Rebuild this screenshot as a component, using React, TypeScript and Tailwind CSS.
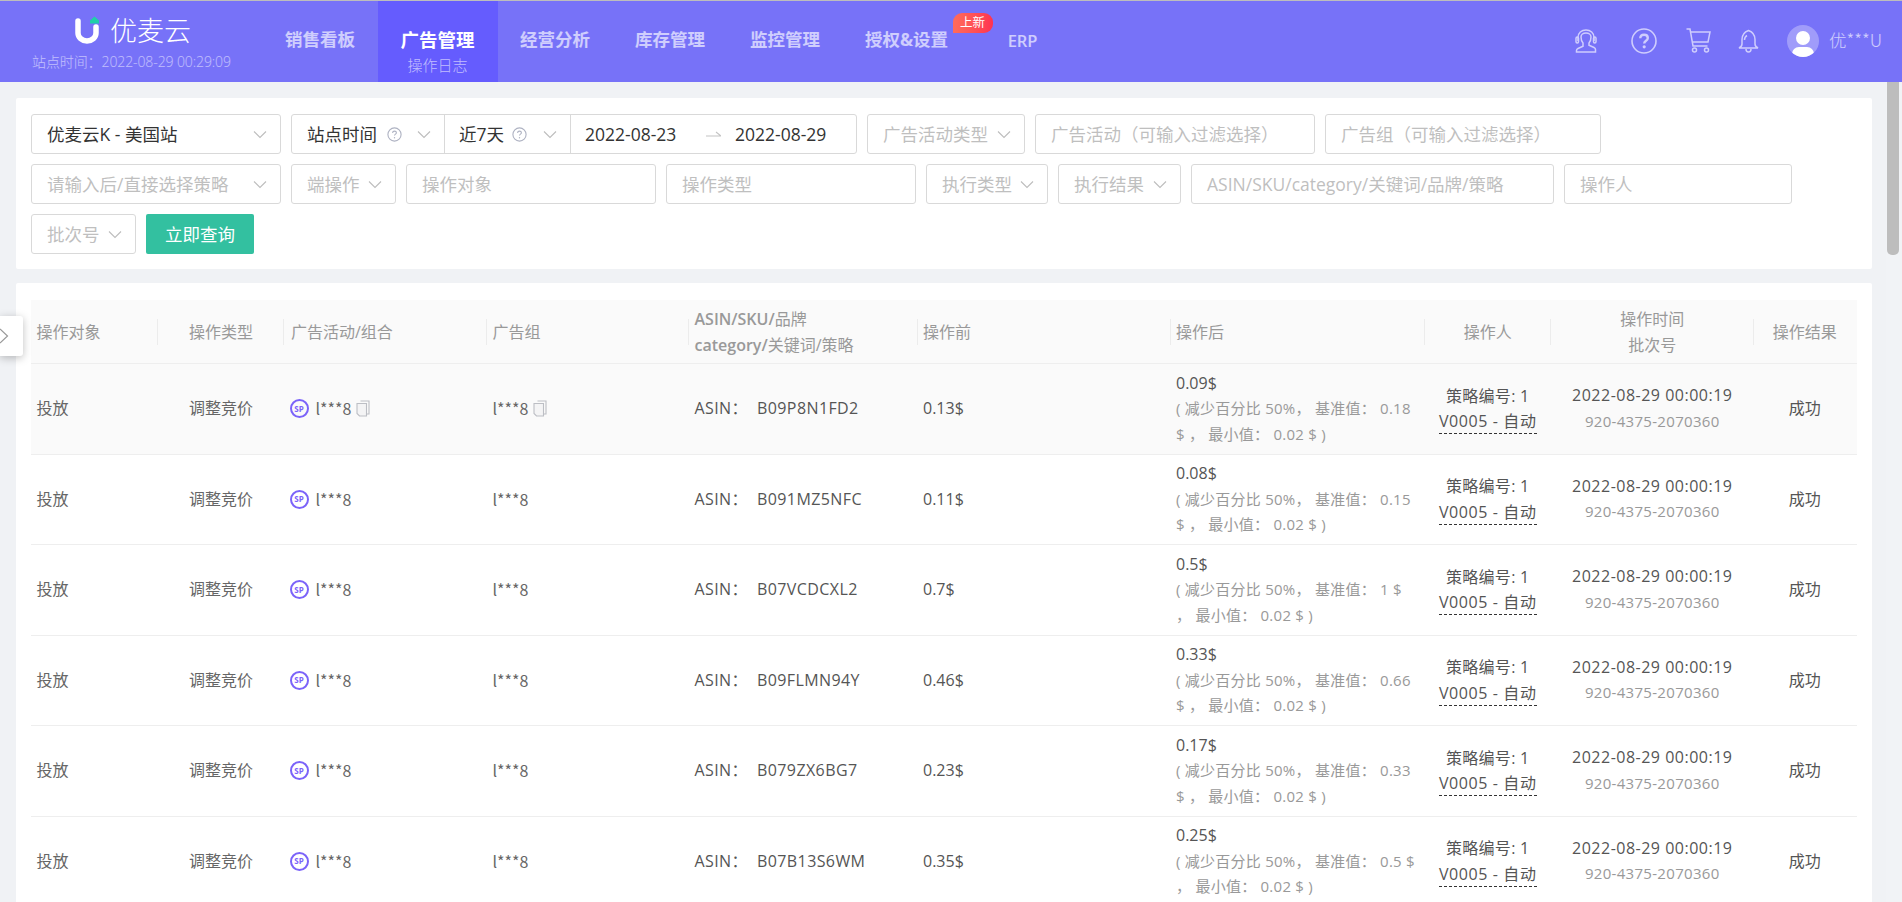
import React from 'react';

const navItems = ['销售看板', '广告管理', '经营分析', '库存管理', '监控管理', '授权&设置'];

const rows = [
  { asin: 'B09P8N1FD2', before: '0.13$', after: '0.09$', l1: '( 减少百分比 50%， 基准值： 0.18', l2: '$ ， 最小值： 0.02 $ )', copy: true },
  { asin: 'B091MZ5NFC', before: '0.11$', after: '0.08$', l1: '( 减少百分比 50%， 基准值： 0.15', l2: '$ ， 最小值： 0.02 $ )', copy: false },
  { asin: 'B07VCDCXL2', before: '0.7$', after: '0.5$', l1: '( 减少百分比 50%， 基准值： 1 $', l2: '， 最小值： 0.02 $ )', copy: false },
  { asin: 'B09FLMN94Y', before: '0.46$', after: '0.33$', l1: '( 减少百分比 50%， 基准值： 0.66', l2: '$ ， 最小值： 0.02 $ )', copy: false },
  { asin: 'B079ZX6BG7', before: '0.23$', after: '0.17$', l1: '( 减少百分比 50%， 基准值： 0.33', l2: '$ ， 最小值： 0.02 $ )', copy: false },
  { asin: 'B07B13S6WM', before: '0.35$', after: '0.25$', l1: '( 减少百分比 50%， 基准值： 0.5 $', l2: '， 最小值： 0.02 $ )', copy: false },
];

const gridCols = 'grid grid-cols-[127px_126px_203px_202px_228.5px_253px_254px_126.5px_202.5px_102.5px]';

const Chevron = () => (
  <svg width="14" height="9" viewBox="0 0 14 9" fill="none" className="shrink-0">
    <path d="M1 1.5 7 7.5 13 1.5" stroke="#bdbdbd" strokeWidth="1.1" />
  </svg>
);

const Help = () => (
  <svg width="15" height="15" viewBox="0 0 15 15" fill="none" className="shrink-0">
    <circle cx="7.5" cy="7.5" r="6.6" stroke="#aeb2c2" strokeWidth="1.1" />
    <path d="M5.6 6c0-1.2.9-1.9 1.9-1.9S9.4 4.800 9.400 5.800c0 1.300-1.900 1.300-1.900 2.700" stroke="#aeb2c2" strokeWidth="1.1" />
    <circle cx="7.500" cy="10.700" r=".7" fill="#aeb2c2" />
  </svg>
);

const Field = ({ w, text, arrow }: { w: string; text: string; arrow?: boolean }) => (
  <div className={`${w} h-10 flex items-center justify-between pl-[15px] pr-[13px] bg-white border border-[#d9d9d9] rounded-[3px] text-[#bfbfbf] whitespace-nowrap`}>
    <span>{text}</span>
    {arrow && <Chevron />}
  </div>
);

const SpIcon = () => (
  <span className="w-[19px] h-[19px] rounded-full border-2 border-[#7b63f9] flex items-center justify-center shrink-0 text-[8px] leading-none font-bold text-[#7b63f9]">SP</span>
);

const CopyIcon = () => (
  <svg width="14" height="17" viewBox="0 0 14 17" fill="none" className="shrink-0">
    <path d="M4.500 1h8.500v13H11" stroke="#bcbec4" strokeWidth="1.100" />
    <path d="M1 3.500h9.500V16H3.500L1 13.500z" stroke="#bcbec4" strokeWidth="1.100" fill="#f4f4f5" />
  </svg>
);

const HeadCell = ({ children, center, divider = true, className = '' }: { children: React.ReactNode; center?: boolean; divider?: boolean; className?: string }) => (
  <div className={`relative flex flex-col justify-center px-[5.5px] leading-[26px] ${center ? 'items-center text-center' : ''} ${className}`}>
    {children}
    {divider && <span className="absolute right-0 top-[19px] h-[26px] w-px bg-[#ececec]" />}
  </div>
);

const cjk = "font-['Noto_Sans_CJK_SC','Liberation_Sans',sans-serif]";

export default function App() {
  return (
    <div className="w-full h-[902px] overflow-hidden flex flex-col relative bg-[#f0f2f5] font-['Open_Sans','Noto_Sans_CJK_SC','Liberation_Sans',sans-serif] text-base">
      <header className="h-[82px] shrink-0 flex border-t border-[#bdbdbd] bg-[#7772f8]">
        <div className="w-[285px] shrink-0 relative">
          <div className="absolute left-[75px] top-[15px] flex items-center">
            <svg width="24" height="28" viewBox="0 0 24 28" fill="none">
              <path d="M3 5v12a9 8 0 0 0 18 0v-6" stroke="#fff" strokeWidth="5.500" strokeLinecap="round" />
              <path d="M19.500 0.500 24 4.500V7.500H15V4.500z" fill="#1fd0a8" strokeLinejoin="round" />
            </svg>
            <span className="ml-[11px] text-[27px] leading-none font-light text-white">优麦云</span>
          </div>
          <div className="absolute left-[32px] top-[52px] text-[14px] leading-[18px] font-light tracking-[-0.1px] text-white/55 whitespace-nowrap">站点时间：2022-08-29 00:29:09</div>
        </div>
        <nav className="flex">
          {navItems.map((item) =>
            item === '广告管理' ? (
              <div key={item} className="w-[120px] bg-[#655cfe] flex flex-col items-center">
                <span className="mt-[25px] text-[18.500px] leading-[27px] font-bold text-white">{item}</span>
                <span className="mt-[2px] text-[15px] leading-[20px] font-light text-white/60">操作日志</span>
              </div>
            ) : (
              <div key={item} className="relative px-[22.500px] pt-[25px] text-[17.500px] leading-[27px] font-bold text-white/65 whitespace-nowrap first:pl-0">
                {item}
                {item === '授权&设置' && (
                  <span className="absolute left-[110px] top-[12px] w-10 h-5 rounded-[9px] rounded-bl-none bg-gradient-to-r from-[#ff6b5b] to-[#ff3151] text-[12.500px] leading-5 font-normal text-white text-center">上新</span>
                )}
              </div>
            ),
          )}
          <div className="ml-[37px] pt-[26px] text-[16.500px] leading-[27px] font-semibold text-white/65">ERP</div>
        </nav>
        <div className="ml-auto flex items-center pr-[20px] pb-[2px] text-[#cfcdfd]">
          <svg width="22" height="24" viewBox="0 0 22 24" fill="none" stroke="currentColor" strokeWidth="1.500">
            <path d="M3 12V8.500C3 4 6.500 1 11 1s8 3 8 7.500V12" />
            <path d="M6 8c0-2.500 2.300-4 5-4s5 1.500 5 4-.6 4.500-2 6v2.200l5 2.300c.8.400 1.500 1 1.500 2V23H1.500v-1.500c0-1 .7-1.600 1.500-2l5-2.300V14C6.600 12.500 6 10.500 6 8z" />
            <rect x="1" y="8" width="2.500" height="6" rx="1.200" />
            <rect x="18.500" y="8" width="2.500" height="6" rx="1.200" />
          </svg>
          <svg className="ml-[34px]" width="26" height="26" viewBox="0 0 26 26" fill="none">
            <circle cx="13" cy="13" r="12" stroke="currentColor" strokeWidth="1.600" />
            <path d="M9.300 10.300c0-2.200 1.700-3.500 3.800-3.500s3.700 1.300 3.700 3.200c0 2.900-3.600 2.700-3.600 5.600" stroke="currentColor" strokeWidth="2.400" />
            <circle cx="13.200" cy="18.800" r="1.600" fill="currentColor" />
          </svg>
          <svg className="ml-[29px]" width="25" height="25" viewBox="0 0 25 25" fill="none" stroke="currentColor" strokeWidth="1.500">
            <path d="M0.500 1H4l3 17h14.500" />
            <path d="M4.500 4h19.500l-2 10H6.300" />
            <circle cx="8.500" cy="22" r="2" />
            <circle cx="20.500" cy="22" r="2" />
          </svg>
          <svg className="ml-[27px]" width="21" height="24" viewBox="0 0 21 24" fill="none" stroke="currentColor" strokeWidth="1.500">
            <path d="M10.500 1.500C6.500 3 4 6 4 10.500V15c0 1.500-1 3-3 4h19c-2-1-3-2.500-3-4v-4.500c0-4.500-2.500-7.500-6.500-9z" />
            <path d="M8 20c0 2 1 3 2.500 3s2.500-1 2.500-3" />
            <path d="M6.500 11c0-2 .8-3.500 2.500-4.500" />
          </svg>
          <span className="ml-[28px] w-8 h-8 rounded-full bg-white/30 overflow-hidden relative shrink-0">
            <span className="absolute left-[9px] top-[6px] w-[14px] h-[14px] rounded-full bg-white" />
            <span className="absolute left-[5px] top-[22px] w-[22px] h-[14px] rounded-full bg-white" />
          </span>
          <span className={`ml-[10px] text-[17.500px] font-light text-white/65 whitespace-nowrap ${cjk}`}>优***U</span>
        </div>
      </header>

      <div className="flex-1 min-h-0 flex">
        <main className="flex-1 min-w-0 overflow-hidden pl-4 pr-[14px] pt-4">
          <section className="h-[171px] bg-white rounded-[2px] px-[15px] pt-4 text-[17.500px]">
            <div className="flex flex-wrap gap-[10px]">
              <div className="w-[250px] h-10 flex items-center justify-between pl-[15px] pr-[13px] border border-[#d9d9d9] rounded-[3px] text-[#333]">
                <span>优麦云K - 美国站</span>
                <Chevron />
              </div>
              <div className="w-[566px] h-10 flex border border-[#d9d9d9] rounded-[3px] text-[#333]">
                <div className="w-[153px] flex items-center pl-[15px] pr-[13px] border-r border-[#d9d9d9]">
                  <span>站点时间</span>
                  <span className="ml-[10px]"><Help /></span>
                  <span className="ml-auto"><Chevron /></span>
                </div>
                <div className="w-[126px] flex items-center pl-[14px] pr-[13px] border-r border-[#d9d9d9]">
                  <span>近7天</span>
                  <span className="ml-[8px]"><Help /></span>
                  <span className="ml-auto"><Chevron /></span>
                </div>
                <div className="flex-1 flex items-center pl-[14px]">
                  <span className="w-[121px]">2022-08-23</span>
                  <svg width="15" height="6" viewBox="0 0 15 6" fill="none"><path d="M0 5h15L10 1" stroke="#c4c4c4" strokeWidth="1.100" /></svg>
                  <span className="ml-[14px]">2022-08-29</span>
                </div>
              </div>
              <Field w="w-[158px]" text="广告活动类型" arrow />
              <Field w="w-[280px]" text="广告活动（可输入过滤选择）" />
              <Field w="w-[276px]" text="广告组（可输入过滤选择）" />
              <Field w="w-[250px]" text="请输入后/直接选择策略" arrow />
              <Field w="w-[105px]" text="端操作" arrow />
              <Field w="w-[250px]" text="操作对象" />
              <Field w="w-[250px]" text="操作类型" />
              <Field w="w-[122px]" text="执行类型" arrow />
              <Field w="w-[123px]" text="执行结果" arrow />
              <Field w="w-[363px]" text="ASIN/SKU/category/关键词/品牌/策略" />
              <Field w="w-[228px]" text="操作人" />
              <Field w="w-[105px]" text="批次号" arrow />
              <button className="w-[108px] h-10 bg-[#33c0a0] rounded-[2px] text-white">立即查询</button>
            </div>
          </section>

          <section className="mt-[14px] bg-white rounded-[2px] px-[15px] pt-[17px] h-[640px]">
            <div className={`${gridCols} h-16 bg-[#fafafa] border-b border-[#eeeeee] text-[#999]`}>
              <HeadCell>操作对象</HeadCell>
              <HeadCell center>操作类型</HeadCell>
              <HeadCell className="pl-[7px]">广告活动/组合</HeadCell>
              <HeadCell>广告组</HeadCell>
              <HeadCell>
                <span><span className="font-semibold">ASIN/SKU/</span>品牌</span>
                <span><span className="font-semibold">category/</span>关键词/策略</span>
              </HeadCell>
              <HeadCell>操作前</HeadCell>
              <HeadCell>操作后</HeadCell>
              <HeadCell center>操作人</HeadCell>
              <HeadCell center>
                <span>操作时间</span>
                <span>批次号</span>
              </HeadCell>
              <HeadCell center divider={false}>操作结果</HeadCell>
            </div>
            {rows.map((r) => (
              <div key={r.asin} className={`${gridCols} h-[90.500px] border-b border-[#eeeeee] items-center leading-[25.500px] text-[#666] ${r.copy ? 'bg-[#fafafa]' : ''}`}>
                <div className="px-[5.500px]">投放</div>
                <div className="text-center">调整竞价</div>
                <div className="px-[5.500px] flex items-center">
                  <SpIcon />
                  <span className={`ml-[7px] ${cjk}`}>l***8</span>
                  {r.copy && <span className="ml-[5px]"><CopyIcon /></span>}
                </div>
                <div className="pl-[5.500px] flex items-center">
                  <span className={cjk}>l***8</span>
                  {r.copy && <span className="ml-[5px]"><CopyIcon /></span>}
                </div>
                <div className="px-[5.500px] text-[#555] whitespace-pre tracking-[0.4px]">ASIN：  {r.asin}</div>
                <div className="px-[5.500px] text-[#555]">{r.before}</div>
                <div className="px-[5.500px] whitespace-nowrap">
                  <div className="text-[#555]">{r.after}</div>
                  <div className="text-[15px] text-[#999] tracking-[0.25px]">{r.l1}</div>
                  <div className="text-[15px] text-[#999] tracking-[0.25px]">{r.l2}</div>
                </div>
                <div className="flex flex-col items-center text-[#555]">
                  <span className="tracking-[0.3px]">策略编号: 1</span>
                  <span className="leading-[24px] tracking-[0.6px] border-b border-dashed border-[#333]">V0005 - 自动</span>
                </div>
                <div className="flex flex-col items-center whitespace-nowrap">
                  <span className="text-[#555] tracking-[0.5px]">2022-08-29 00:00:19</span>
                  <span className="text-[15px] text-[#999] tracking-[0.3px]">920-4375-2070360</span>
                </div>
                <div className="text-center text-[#555]">成功</div>
              </div>
            ))}
          </section>
        </main>

        <div className="w-4 shrink-0 bg-[#f1f3f6] pl-px">
          <div className="w-3 h-[173px] bg-[#bdbdbd] rounded-b-[5px]" />
        </div>
      </div>

      <div className="absolute left-0 top-[316px] w-[23px] h-10 bg-white rounded-r-[3px] shadow-[0_2px_8px_rgba(0,0,0,0.25)] flex items-center">
        <svg width="9" height="16" viewBox="0 0 9 16" fill="none">
          <path d="M0 1 7.500 8 0 15" stroke="#999" strokeWidth="1.200" />
        </svg>
      </div>
    </div>
  );
}
